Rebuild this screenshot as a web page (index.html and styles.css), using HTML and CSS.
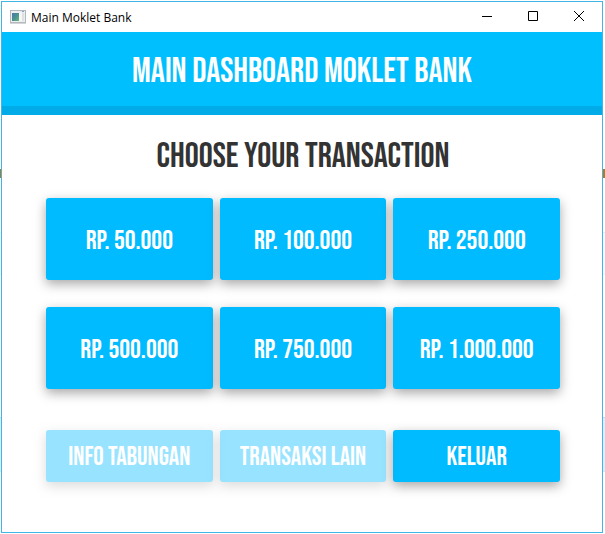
FILE: index.html
```
<!DOCTYPE html>
<html lang="id">
<head>
<meta charset="utf-8">
<meta name="viewport" content="width=device-width, initial-scale=1">
<title>Main Moklet Bank</title>
<link rel="stylesheet" href="styles.css">
</head>
<body>
<div class="window">
  <div class="titlebar">
    <svg class="app-icon" width="16" height="14" viewBox="0 0 16 14" aria-hidden="true">
      <defs>
        <linearGradient id="pane" x1="0" y1="0" x2="1" y2="1">
          <stop offset="0" stop-color="#4a78ad"/>
          <stop offset="0.5" stop-color="#4a9190"/>
          <stop offset="1" stop-color="#69b780"/>
        </linearGradient>
      </defs>
      <rect x="0.5" y="0.5" width="15" height="12" fill="#eceef0" stroke="#b5b9bd"/>
      <path d="M0 13.5h16" stroke="#d3d5d7"/>
      <rect x="2" y="3" width="7" height="8" fill="url(#pane)"/>
      <rect x="9" y="3" width="3" height="8" fill="#f7f7f3"/>
      <rect x="12" y="3" width="2" height="8" fill="#dde1e4"/>
      <path d="M12 1.500h2" stroke="#7da4cf"/>
    </svg>
    <span class="caption">Main Moklet Bank</span>
    <div class="controls">
      <button class="control" type="button" aria-label="Minimize"><svg width="10" height="10" viewBox="0 0 10 10"><path d="M0 5.500h10"/></svg></button>
      <button class="control" type="button" aria-label="Maximize"><svg width="10" height="10" viewBox="0 0 10 10"><path d="M.5.5h9v9h-9z"/></svg></button>
      <button class="control" type="button" aria-label="Close"><svg width="10" height="10" viewBox="0 0 10 10"><path d="M0 0l10 10M10 0L0 10"/></svg></button>
    </div>
  </div>
  <header class="banner"><h1>MAIN DASHBOARD MOKLET BANK</h1></header>
  <main class="content">
    <h2>CHOOSE YOUR TRANSACTION</h2>
    <div class="amounts">
      <button type="button" class="tile">RP. 50.000</button>
      <button type="button" class="tile">RP. 100.000</button>
      <button type="button" class="tile">RP. 250.000</button>
      <button type="button" class="tile">RP. 500.000</button>
      <button type="button" class="tile">RP. 750.000</button>
      <button type="button" class="tile">RP. 1.000.000</button>
    </div>
    <div class="actions">
      <button type="button" class="tile short" disabled>INFO TABUNGAN</button>
      <button type="button" class="tile short" disabled>TRANSAKSI LAIN</button>
      <button type="button" class="tile short">KELUAR</button>
    </div>
  </main>
</div>
</body>
</html>
```
FILE: styles.css
```
* { box-sizing: border-box; }

body {
  display: flex;
  min-height: 100vh;
  margin: 0;
  padding: 1px 2px 1px 1px;
  /* desktop rows showing past the window's edges */
  background: linear-gradient(#fff 169px, #b97818 169px, #b97818 178px, #fff 178px, #fff 232px, #d0e4fc 232px, #f3f8ff 233px, #f3f8ff 274px, #d0e4fc 274px, #fff 275px, #fff 417px, #b8c8d4 417px, #d9edff 418px, #d9edff 471px, #b8c8d4 471px, #fff 472px);
  font-family: "Bebas Neue", "Liberation Sans Narrow", "Roboto Condensed", "Open Sans Condensed", "Liberation Sans", sans-serif;
}

.window {
  display: flex;
  flex: 1;
  flex-direction: column;
  border: 1px solid #41b5e5;
  background: #fff;
}

.titlebar {
  display: flex;
  align-items: center;
  height: 30px;
  padding-left: 8px;
}

.caption {
  margin-left: 5px;
  color: #000;
  font: 12px "Segoe UI", "Open Sans", sans-serif;
}

.controls {
  display: flex;
  align-self: stretch;
  margin-left: auto;
}

.control {
  display: flex;
  align-items: center;
  justify-content: center;
  width: 46px;
  padding: 0 0 2px;
  border: 0;
  background: none;
}

.control svg {
  fill: none;
  stroke: #000;
}

.banner {
  display: flex;
  align-items: center;
  justify-content: center;
  height: 83px;
  padding-top: 6px;
  border-bottom: 9px solid #00abe8;
  background: #00bfff;
  color: #fff;
}

h1,
h2 {
  margin: 0;
  font-size: 35px;
  font-weight: 400;
  line-height: 40px;
  text-align: center;
  white-space: nowrap;
}

.content {
  padding: 22px 42px 50px;
  padding-left: 44px;
}

h2 {
  color: #333;
}

.amounts,
.actions {
  display: grid;
  grid-template-columns: repeat(3, 1fr);
  gap: 27px 7px;
}

.amounts { margin-top: 21px; }
.actions { margin-top: 41px; }

.tile {
  height: 82px;
  padding: 3px 0 0;
  border: 0;
  border-radius: 3px;
  background: #00bbff;
  box-shadow: 0 4px 12px rgba(0, 0, 0, 0.35);
  color: #fff;
  font-family: inherit;
  font-size: 27px;
  font-weight: 400;
  white-space: nowrap;
}

.short {
  height: 52px;
  font-size: 26px;
}

.tile:disabled { opacity: 0.4; }
```
